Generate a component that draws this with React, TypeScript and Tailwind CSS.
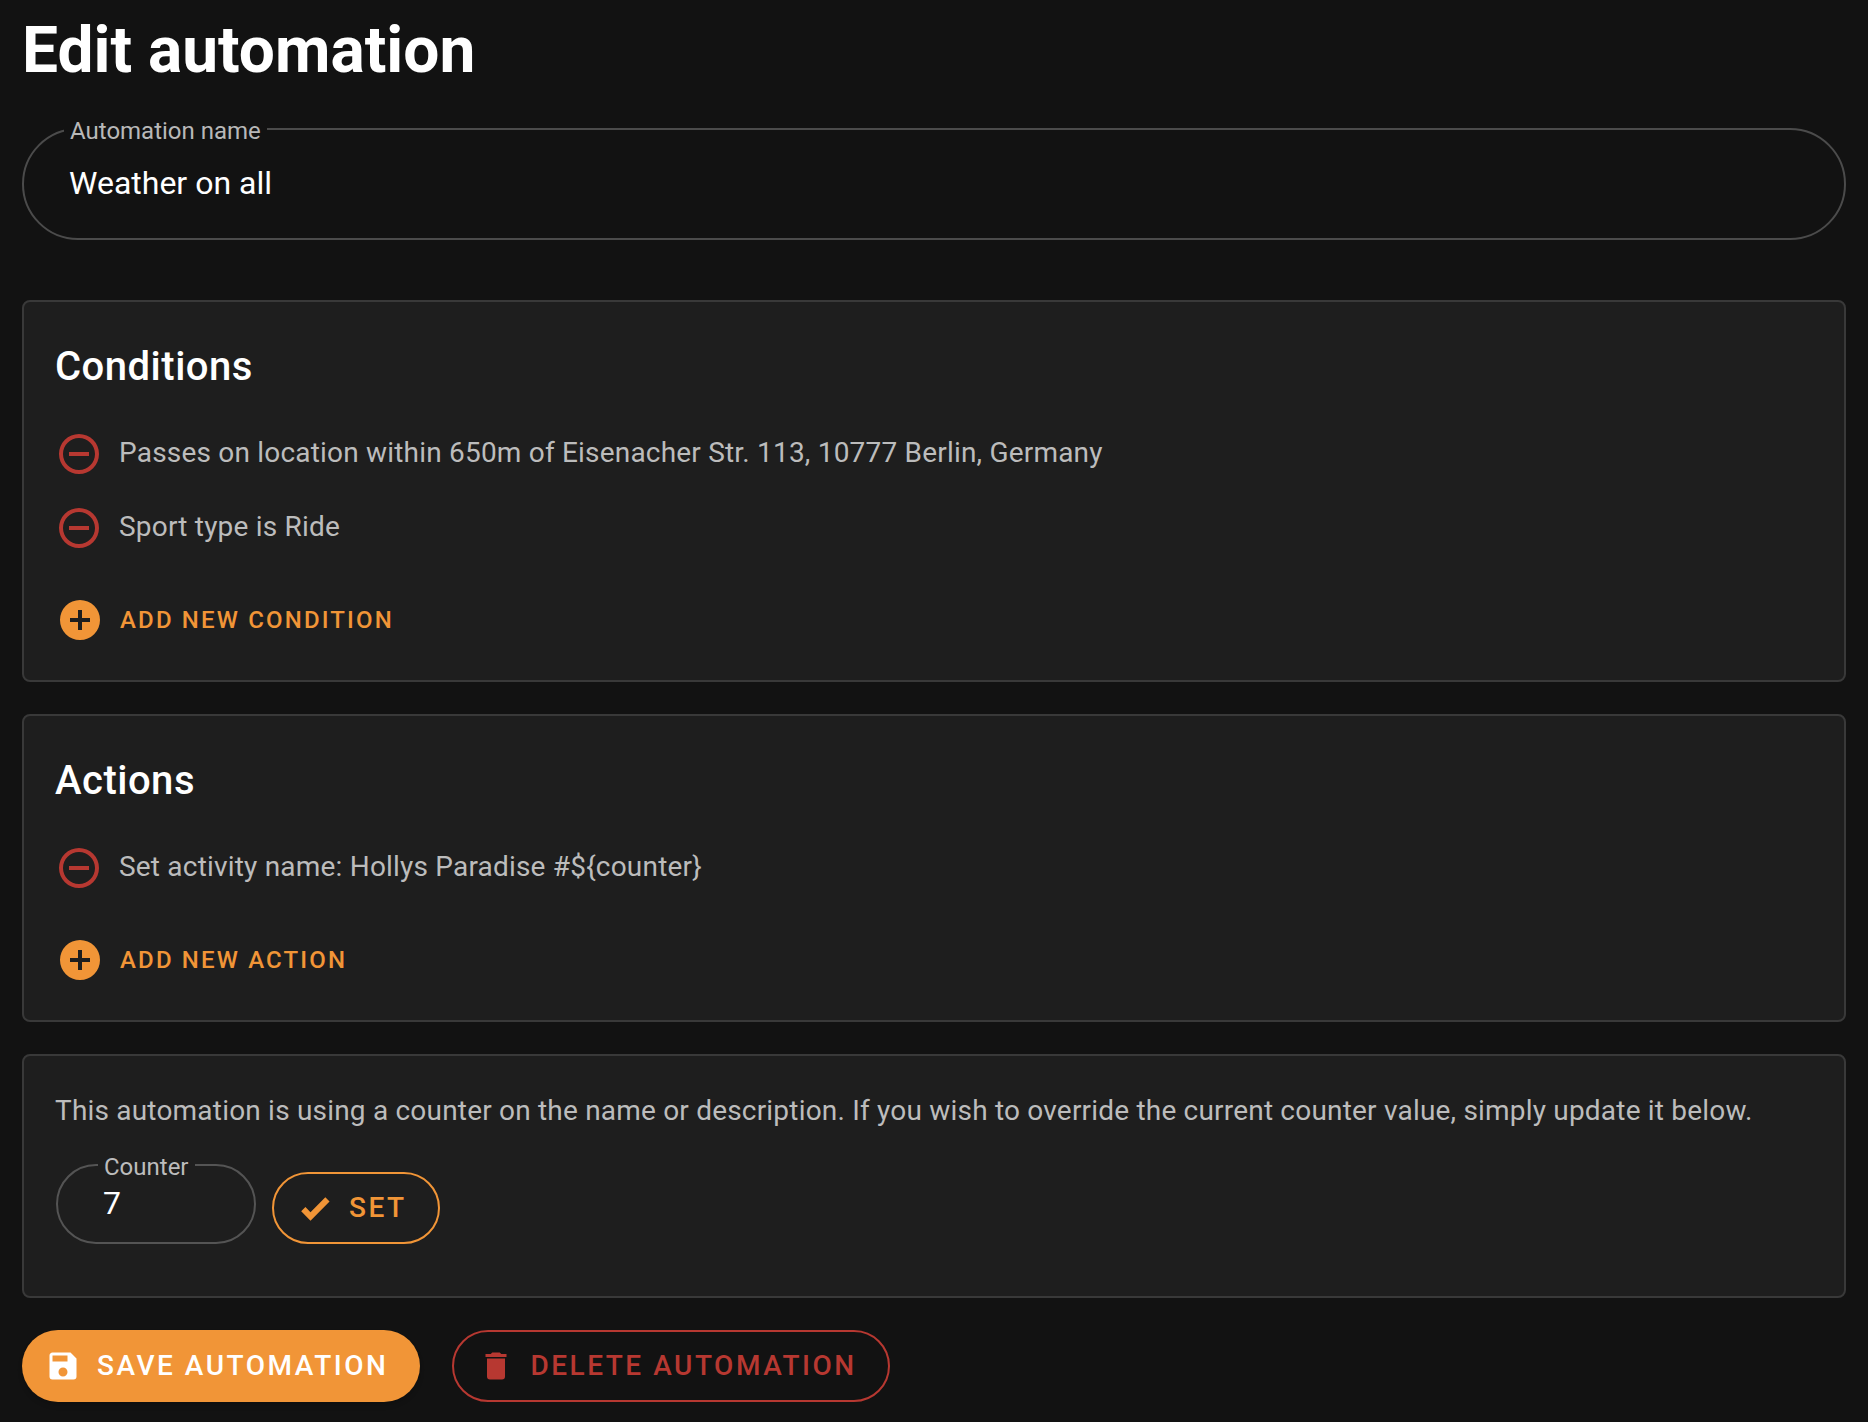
import { useId, useState, type ReactNode } from "react";

const icons = {
  minus:
    "M12,20C7.59,20 4,16.41 4,12C4,7.59 7.59,4 12,4C16.41,4 20,7.59 20,12C20,16.41 16.41,20 12,20M12,2A10,10 0 0,0 2,12A10,10 0 0,0 12,22A10,10 0 0,0 22,12A10,10 0 0,0 12,2M7,13H17V11H7",
  plus: "M17,13H13V17H11V13H7V11H11V7H13V11H17M12,2A10,10 0 0,0 2,12A10,10 0 0,0 12,22A10,10 0 0,0 22,12A10,10 0 0,0 12,2Z",
  check: "M9,20.42L2.79,14.21L5.62,11.38L9,14.77L18.88,4.88L21.71,7.71L9,20.42Z",
  save: "M15,9H5V5H15M12,19A3,3 0 0,1 9,16A3,3 0 0,1 12,13A3,3 0 0,1 15,16A3,3 0 0,1 12,19M17,3H5C3.89,3 3,3.9 3,5V19A2,2 0 0,0 5,21H19A2,2 0 0,0 21,19V7L17,3Z",
  trash: "M19,4H15.5L14.5,3H9.5L8.5,4H5V6H19V4M6,19A2,2 0 0,0 8,21H16A2,2 0 0,0 18,19V7H6V19Z",
};

function Icon({ name, className }: { name: keyof typeof icons; className: string }) {
  return (
    <svg viewBox="0 0 24 24" className={`shrink-0 fill-current ${className}`} aria-hidden="true">
      <path d={icons[name]} />
    </svg>
  );
}

function Card({ children }: { children: ReactNode }) {
  return <section className="rounded-lg border-2 border-[#393939] bg-[#1e1e1e] pr-8 pl-[31px]">{children}</section>;
}

function RuleCard({ title, rules, addLabel }: { title: string; rules: string[]; addLabel: string }) {
  return (
    <Card>
      <h2 className="pt-[33px] text-[40px] leading-16 font-medium tracking-[0.0125em] text-white">{title}</h2>
      <ul className="mt-[31px] flex flex-col gap-[26px]">
        {rules.map((rule) => (
          <li key={rule} className="flex items-center gap-4">
            <button type="button" aria-label={`Remove: ${rule}`} className="text-[#b73831]">
              <Icon name="minus" className="size-12" />
            </button>
            <span className="pb-0.5 text-[28px] leading-10 tracking-[0.007em] text-[#bcbcbc]">{rule}</span>
          </li>
        ))}
      </ul>
      <button type="button" className="mt-11 mb-9 ml-px flex items-center gap-4 text-[#f19537]">
        <Icon name="plus" className="size-12" />
        <span className="text-2xl font-medium tracking-[0.09em] uppercase">{addLabel}</span>
      </button>
    </Card>
  );
}

export default function App() {
  const nameId = useId();
  const counterId = useId();
  const [name, setName] = useState("Weather on all");
  const [counter, setCounter] = useState("7");

  return (
    <main className="min-h-screen bg-[#121212] px-[22px] pt-[19px] pb-5 font-[Roboto,sans-serif]">
      <h1 className="text-[64px] leading-16 font-bold text-white">Edit automation</h1>

      <div className="relative mt-[45px]">
        <input
          id={nameId}
          value={name}
          onChange={(e) => setName(e.target.value)}
          className="block h-28 w-full rounded-full border-2 border-[#4b4b4b] px-[45px] pb-0.5 text-[32px] text-white outline-none"
        />
        <label
          htmlFor={nameId}
          className="absolute -top-[9px] left-[42px] bg-[#121212] px-1.5 text-2xl leading-6 text-[#b8b8b8]"
        >
          Automation name
        </label>
      </div>

      <div className="mt-15 flex flex-col gap-8">
        <RuleCard
          title="Conditions"
          rules={[
            "Passes on location within 650m of Eisenacher Str. 113, 10777 Berlin, Germany",
            "Sport type is Ride",
          ]}
          addLabel="Add new condition"
        />
        <RuleCard
          title="Actions"
          rules={["Set activity name: Hollys Paradise #${counter}"]}
          addLabel="Add new action"
        />
        <Card>
          <p className="pt-[35px] text-[28px] leading-10 tracking-[0.007em] text-[#bcbcbc]">
            This automation is using a counter on the name or description. If you wish to override the current counter
            value, simply update it below.
          </p>
          <div className="mt-[33px] mb-13 ml-px flex items-end gap-4">
            <div className="relative">
              <input
                id={counterId}
                inputMode="numeric"
                value={counter}
                onChange={(e) => setCounter(e.target.value)}
                className="block h-20 w-50 rounded-full border-2 border-[#545454] px-[45px] pb-0.5 text-[32px] text-white outline-none"
              />
              <label
                htmlFor={counterId}
                className="absolute -top-[9px] left-[42px] bg-[#1e1e1e] px-1.5 text-2xl leading-6 text-[#bcbcbc]"
              >
                Counter
              </label>
            </div>
            <button
              type="button"
              className="flex h-18 items-center gap-4 rounded-full border-2 border-[#f19537] pr-[31px] pl-[23px] text-[28px] font-medium tracking-[0.09em] text-[#f19537] uppercase"
            >
              <Icon name="check" className="size-9" />
              Set
            </button>
          </div>
        </Card>
      </div>

      <div className="mt-8 flex flex-wrap gap-8">
        <button
          type="button"
          className="flex h-18 items-center gap-4 rounded-full bg-[#f19537] pr-8 pl-[23px] text-[28px] font-medium tracking-[0.09em] text-white uppercase shadow-md"
        >
          <Icon name="save" className="size-9" />
          Save automation
        </button>
        <button
          type="button"
          className="flex h-18 items-center gap-4 rounded-full border-2 border-[#b73831] pr-[31px] pl-6 text-[28px] font-medium tracking-[0.09em] text-[#b73831] uppercase"
        >
          <Icon name="trash" className="size-9" />
          Delete automation
        </button>
      </div>
    </main>
  );
}
